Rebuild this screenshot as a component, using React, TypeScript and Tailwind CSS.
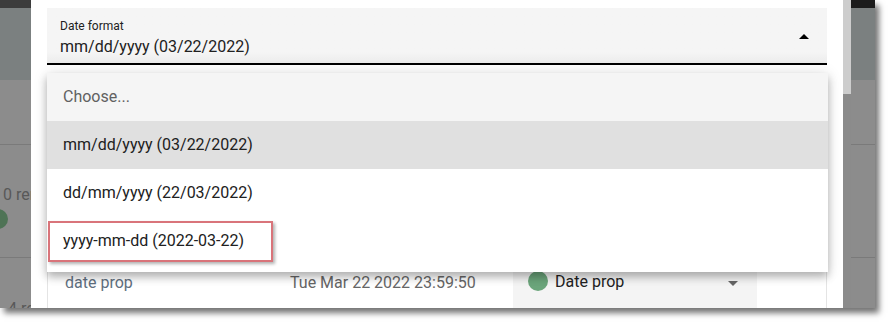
import React from "react";

const font = { fontFamily: "Roboto, 'Liberation Sans', sans-serif" };

function OverlayStrip({ dark, children }: { dark: string; children?: React.ReactNode }) {
  return (
    <div className="flex flex-col h-full relative overflow-hidden">
      <div className="h-[8px] shrink-0" style={{ background: dark }} />
      <div className="h-[72px] shrink-0 bg-[#7b8080]" />
      <div className="h-[65px] shrink-0 bg-[#8c8c8c] border-b border-[#7a7a7a]" />
      <div className="h-[113px] shrink-0 bg-[#8c8c8c] border-b border-[#7a7a7a] relative">{children}</div>
      <div className="flex-1 bg-[#8c8c8c]" />
    </div>
  );
}

export default function App() {
  return (
    <div className="w-[889px] h-[324px] bg-white" style={font}>
      <div className="w-[875px] h-[308px] flex overflow-hidden shadow-[4px_5px_6px_rgba(0,0,0,0.55)] relative">
        {/* left overlay */}
        <div className="w-[31px] shrink-0 h-full relative">
          <OverlayStrip dark="#3c3c3c">
            <div className="absolute left-[3px] top-[38px] text-[16px] text-[#585858] whitespace-nowrap">0 ren</div>
            <div className="absolute left-[-12px] top-[64px] w-[20px] h-[20px] rounded-full bg-[#4e7355]" />
          </OverlayStrip>
          <div className="absolute left-[8px] top-[297px] text-[16px] text-[#585858] whitespace-nowrap">4 re</div>
        </div>

        {/* dialog */}
        <div className="w-[812px] shrink-0 h-full bg-white relative">
          <div className="px-[16px] pt-[8px]">
            {/* select field */}
            <div className="h-[57px] bg-gradient-to-b from-[#f5f5f5] from-80% to-[#ececec] border-b-2 border-black relative flex flex-col pl-[13px] pt-[11px]">
              <div className="text-[12px] leading-[14px] text-[#212121]">Date format</div>
              <div className="text-[16px] leading-[22px] text-[#212121] mt-[3px]">mm/dd/yyyy (03/22/2022)</div>
              <div className="absolute right-[18px] top-[26px] w-0 h-0 border-l-[5px] border-r-[5px] border-b-[5px] border-l-transparent border-r-transparent border-b-black" />
            </div>
            {/* table beneath */}
            <div className="mt-[200px] h-[60px] border-l border-r border-[#e4e4e4] flex items-start">
              <div className="w-[242px] pl-[17px] pt-[6px] text-[16px] text-[#5f6f80]">date prop</div>
              <div className="w-[223px] pt-[6px] text-[16px] text-[#666666] whitespace-nowrap">Tue Mar 22 2022 23:59:50</div>
              <div className="w-[244px] h-[60px] bg-[#f4f4f4] flex items-start pl-[15px] pt-[5px] relative">
                <div className="w-[20px] h-[20px] rounded-full bg-[#6ba57b] mt-[1px]" />
                <div className="ml-[7px] text-[16px] text-[#222222]">Date prop</div>
                <div className="absolute right-[19px] top-[16px] w-0 h-0 border-l-[5px] border-r-[5px] border-t-[5px] border-l-transparent border-r-transparent border-t-[#666666]" />
              </div>
            </div>
          </div>

          {/* dropdown menu */}
          <div className="absolute left-[16px] top-[73px] w-[781px] bg-white pb-[7px] shadow-[0_5px_8px_rgba(0,0,0,0.25),0_1px_14px_rgba(0,0,0,0.12)] text-[16px]">
            <div className="h-[48px] bg-[#f5f5f5] flex items-center pl-[16px] text-[#616161]">Choose...</div>
            <div className="h-[48px] bg-[#e0e0e0] flex items-center pl-[16px] text-[#212121]">mm/dd/yyyy (03/22/2022)</div>
            <div className="h-[48px] bg-white flex items-center pl-[16px] text-[#212121]">dd/mm/yyyy (22/03/2022)</div>
            <div className="h-[48px] bg-white flex items-center pl-[16px] text-[#212121]">yyyy-mm-dd (2022-03-22)</div>
          </div>
          {/* highlight box */}
          <div className="absolute left-[17px] top-[221px] w-[225px] h-[41px] border-2 border-[#d9747a] shadow-[2px_2px_3px_rgba(0,0,0,0.3)]" />
        </div>

        {/* scrollbar */}
        <div className="w-[8px] shrink-0 h-full flex flex-col bg-[#8b8b8b]">
          <div className="h-[94px] bg-[#cdcdcd]" />
        </div>

        {/* right overlay */}
        <div className="w-[24px] shrink-0 h-full">
          <OverlayStrip dark="#1c1c1c" />
        </div>
      </div>
    </div>
  );
}
